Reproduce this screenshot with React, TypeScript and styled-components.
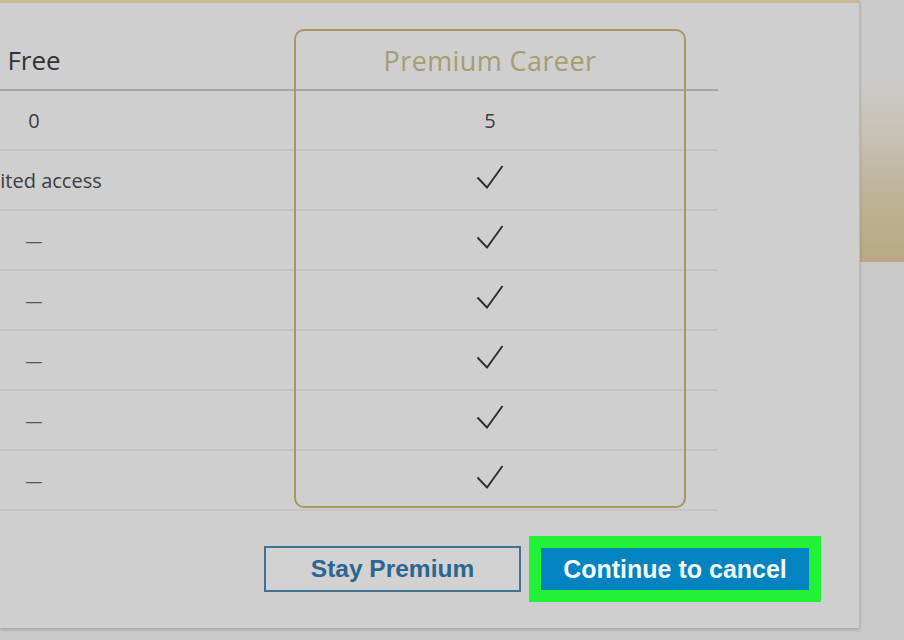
import React from 'react';
import styled, { createGlobalStyle } from 'styled-components';

const GlobalStyle = createGlobalStyle`
  html, body {
    margin: 0;
    padding: 0;
    background: #c9c9c9;
    overflow: hidden;
  }
`;

const Page = styled.div`
  display: flex;
  width: 904px;
  height: 640px;
  background: #c9c9c9;
`;

const Modal = styled.div`
  display: flex;
  flex-direction: column;
  width: 860px;
  height: 628px;
  box-sizing: border-box;
  padding-top: 26px;
  background: #cfcfcf;
  border-top: 3px solid #c6b994;
  border-right: 1px solid #b7b7b7;
  box-shadow: 0 2px 3px rgba(0, 0, 0, 0.18);
  font-family: 'Open Sans', 'DejaVu Sans', sans-serif;
  position: relative;
  z-index: 1;
`;

const Side = styled.div`
  flex: 1;
  display: flex;
  flex-direction: column;
`;

const Glow = styled.div`
  height: 262px;
  background: linear-gradient(
    to bottom,
    #cbcbcb 0%,
    #cbcbcb 30%,
    #c8c5bb 45%,
    #bfb59a 72%,
    #b8a883 100%
  );
`;

const Table = styled.div`
  display: grid;
  grid-template-columns: 68px 226px 392px 32px;
  grid-template-rows: 62px repeat(7, 60px);
  width: 718px;
`;

const Cell = styled.div<{ $head?: boolean; $col: number; $row: number }>`
  grid-column: ${(p) => p.$col};
  grid-row: ${(p) => p.$row};
  display: flex;
  align-items: center;
  justify-content: center;
  white-space: nowrap;
  box-sizing: border-box;
  border-bottom: ${(p) => (p.$head ? '2px solid #a6a6a6' : '2px solid #c4c4c4')};
  font-size: 20px;
  color: #3d3d3d;
`;

const PlanTitle = styled.span<{ $gold?: boolean }>`
  font-size: ${(p) => (p.$gold ? '27px' : '26px')};
  letter-spacing: ${(p) => (p.$gold ? '0.4px' : '0')};
  color: ${(p) => (p.$gold ? '#a69c70' : '#333333')};
  margin-top: 2px;
`;

const Dash = styled.span`
  font-size: 17px;
  color: #555555;
`;

const Frame = styled.div`
  grid-column: 3;
  grid-row: 1 / span 8;
  border: 2px solid #a49865;
  border-radius: 10px;
  margin-bottom: 3px;
  pointer-events: none;
  z-index: 1;
`;

const Footer = styled.div`
  display: flex;
  justify-content: flex-end;
  align-items: center;
  gap: 8px;
  padding-right: 38px;
  margin-top: 25px;
  font-family: 'Liberation Sans', Arial, sans-serif;
`;

const OutlineButton = styled.button`
  width: 257px;
  height: 46px;
  background: #d2d2d2;
  border: 2px solid #3f7391;
  font-family: inherit;
  font-weight: bold;
  font-size: 24.5px;
  color: #2c6690;
  cursor: pointer;
`;

const Highlight = styled.div`
  padding: 12px;
  background: #20f236;
`;

const PrimaryButton = styled.button`
  display: block;
  width: 268px;
  height: 42px;
  background: #0284c0;
  border: none;
  font-family: inherit;
  font-weight: bold;
  font-size: 25px;
  color: #f4fbff;
  cursor: pointer;
`;

function Check() {
  return (
    <svg width="28" height="24" viewBox="0 0 28 24" style={{ marginBottom: 7 }}>
      <polyline
        points="1.5,12.5 11,22.5 26.5,1"
        fill="none"
        stroke="#2e2e2e"
        strokeWidth="1.9"
        strokeLinejoin="miter"
      />
    </svg>
  );
}

type Row = { free: React.ReactNode; premium: React.ReactNode };

const rows: Row[] = [
  { free: '0', premium: '5' },
  { free: 'Limited access', premium: <Check /> },
  { free: <Dash>—</Dash>, premium: <Check /> },
  { free: <Dash>—</Dash>, premium: <Check /> },
  { free: <Dash>—</Dash>, premium: <Check /> },
  { free: <Dash>—</Dash>, premium: <Check /> },
  { free: <Dash>—</Dash>, premium: <Check /> },
];

export default function App() {
  return (
    <Page>
      <GlobalStyle />
      <Modal>
        <Table>
          <Cell $head $col={1} $row={1}>
            <PlanTitle>Free</PlanTitle>
          </Cell>
          <Cell $head $col={2} $row={1} />
          <Cell $head $col={3} $row={1}>
            <PlanTitle $gold>Premium Career</PlanTitle>
          </Cell>
          <Cell $head $col={4} $row={1} />
          {rows.map((r, i) => (
            <React.Fragment key={i}>
              <Cell $col={1} $row={i + 2}>{r.free}</Cell>
              <Cell $col={2} $row={i + 2} />
              <Cell $col={3} $row={i + 2}>{r.premium}</Cell>
              <Cell $col={4} $row={i + 2} />
            </React.Fragment>
          ))}
          <Frame />
        </Table>
        <Footer>
          <OutlineButton>Stay Premium</OutlineButton>
          <Highlight>
            <PrimaryButton>Continue to cancel</PrimaryButton>
          </Highlight>
        </Footer>
      </Modal>
      <Side>
        <Glow />
      </Side>
    </Page>
  );
}
